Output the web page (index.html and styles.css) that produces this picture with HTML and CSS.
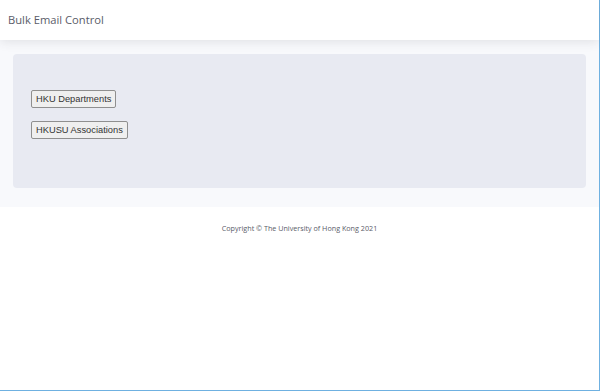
FILE: index.html
```html
<!DOCTYPE html>
<html>
<head>
<meta charset="utf-8">
<link rel="stylesheet" href="styles.css">
</head>
<body>
<div class="page">
  <header class="topbar">
    <span class="brand">Bulk Email Control</span>
  </header>
  <main class="content">
    <div class="card">
      <button class="btn">HKU Departments</button>
      <button class="btn">HKUSU Associations</button>
    </div>
  </main>
  <footer class="footer">Copyright © The University of Hong Kong 2021</footer>
</div>
</body>
</html>
```
FILE: styles.css
```css
html, body {
  margin: 0;
  padding: 0;
  height: 100%;
}
body {
  font-family: "Open Sans", Lato, sans-serif;
  background: #fff;
}
.page {
  box-sizing: border-box;
  height: 100%;
  border-right: 1px solid #6fb1e1;
  border-bottom: 1px solid #6fb1e1;
  display: flex;
  flex-direction: column;
}
.topbar {
  height: 40px;
  flex: none;
  display: flex;
  align-items: center;
  padding-left: 8px;
  background: #fff;
  box-shadow: 0 2px 10px rgba(58, 59, 69, 0.12);
  position: relative;
  z-index: 1;
}
.brand {
  font-size: 11.2px;
  color: #5a5c69;
  margin-top: -1px;
}
.content {
  background: #f8f9fc;
  padding: 14px 13px 19px 13px;
}
.card {
  background: #e8eaf2;
  border-radius: 4px;
  height: 134px;
  box-sizing: border-box;
  padding: 36px 18px 0 18px;
  display: flex;
  flex-direction: column;
  align-items: flex-start;
  gap: 13px;
}
.btn {
  font-family: "Liberation Sans", Arial, sans-serif;
  font-size: 9.3px;
  color: #333;
  background: #efefef;
  border: 1px solid #8f8f8f;
  border-radius: 2px;
  height: 18px;
  padding: 0 4px;
  line-height: 14px;
}
.footer {
  text-align: center;
  font-size: 7.2px;
  color: #5a5c69;
  padding-top: 16px;
}
```
